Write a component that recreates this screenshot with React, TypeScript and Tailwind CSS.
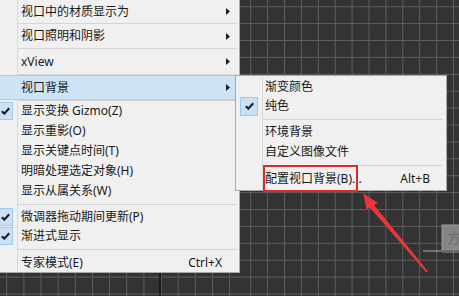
import React from "react";

const FONT = "[font-family:'Noto_Sans','Noto_Sans_CJK_SC',sans-serif]";

function Check() {
  return (
    <svg width="9" height="8" viewBox="0 0 9 8">
      <path d="M0.8 4.2 L3.3 6.6 L8.2 1.2" fill="none" stroke="#1c1c1c" strokeWidth="2.1" />
    </svg>
  );
}

function Tri() {
  return (
    <svg width="4" height="7" viewBox="0 0 4 7">
      <path d="M0 0 L4 3.5 L0 7 Z" fill="#1e1e1e" />
    </svg>
  );
}

type ItemProps = {
  label: string;
  h: string;
  checked?: boolean;
  sub?: boolean;
  shortcut?: string;
  highlight?: boolean;
};

function MainItem({ label, h, checked, sub, shortcut, highlight }: ItemProps) {
  return (
    <div
      className={`flex items-center shrink-0 ${h} ${
        highlight ? "bg-[#cde4f7] border-y border-[#a6cdef]" : ""
      }`}
    >
      <div
        className={`w-[18px] h-full shrink-0 flex items-center ${
          highlight ? "" : "border-r border-[#d9d9d9]"
        }`}
      >
        {checked && (
          <div className="w-[13px] h-[18px] bg-[#c9e0f5] border-y border-r border-[#9cc9ee] flex items-center pl-[1px]">
            <Check />
          </div>
        )}
      </div>
      <div className="pl-[3px] flex-1 text-[12px] leading-none text-[#181818] whitespace-nowrap">{label}</div>
      {shortcut && <div className="text-[12px] leading-none text-[#181818] mr-[17px]">{shortcut}</div>}
      {sub && (
        <div className="mr-[9px] flex items-center">
          <Tri />
        </div>
      )}
    </div>
  );
}

function MainSep({ h }: { h: string }) {
  return (
    <div className={`flex shrink-0 ${h}`}>
      <div className="w-[18px] h-full shrink-0 border-r border-[#d9d9d9]" />
      <div className="flex-1 flex items-center mr-[2px]">
        <div className="w-full h-px bg-[#d3d3d3]" />
      </div>
    </div>
  );
}

function TopSep() {
  return (
    <div className="flex shrink-0 h-px">
      <div className="w-[18px] h-full shrink-0 border-r border-[#d9d9d9]" />
      <div className="flex-1 h-px bg-[#d6d6d6] mr-[2px]" />
    </div>
  );
}

function SubItem({ label, h, checked, shortcut }: ItemProps) {
  return (
    <div className={`flex items-center shrink-0 ${h}`}>
      <div className="w-[27px] h-full shrink-0 border-r border-[#d9d9d9] flex items-center">
        {checked && (
          <div className="ml-[4px] w-[18px] h-[19px] bg-[#c9e0f5] border border-[#9cc9ee] flex items-center justify-center">
            <Check />
          </div>
        )}
      </div>
      <div className="pl-[2px] flex-1 text-[12px] leading-none text-[#181818] whitespace-nowrap">{label}</div>
      {shortcut && <div className="text-[12px] leading-none text-[#181818] mr-[16px]">{shortcut}</div>}
    </div>
  );
}

function SubSep() {
  return (
    <div className="flex shrink-0 h-[6px]">
      <div className="w-[27px] h-full shrink-0 border-r border-[#d9d9d9]" />
      <div className="flex-1 flex items-center mr-[4px]">
        <div className="w-full h-px bg-[#d3d3d3]" />
      </div>
    </div>
  );
}

function Viewport() {
  const vx: number[] = [];
  for (let x = 250.7 - 16.9 * 15; x < 460; x += 16.9) if (x >= 235) vx.push(x);
  const vxBottom: number[] = [];
  for (let x = 6.7; x < 240; x += 17.15) vxBottom.push(x);
  const hy: number[] = [];
  for (let y = 6.7; y < 297; y += 16.9) hy.push(y);
  return (
    <svg className="absolute inset-0" width="459" height="296" viewBox="0 0 459 296">
      <rect width="459" height="296" fill="#333333" />
      {vx.map((x, i) => (
        <line key={"v" + i} x1={x} y1={0} x2={x} y2={296} stroke="#5f5f5f" strokeWidth="1" />
      ))}
      {vxBottom.map((x, i) => (
        <line key={"vb" + i} x1={x} y1={260} x2={x} y2={296} stroke="#5f5f5f" strokeWidth="1" />
      ))}
      {hy.map((y, i) => (
        <line key={"h" + i} x1={0} y1={y} x2={459} y2={y} stroke="#5f5f5f" strokeWidth="1" />
      ))}
      <line x1="160" y1="260" x2="160" y2="296" stroke="#141414" strokeWidth="1.6" />
      <rect x="442" y="225" width="20" height="25" fill="#858585" stroke="#9d9d9d" strokeWidth="1" />
      <text x="447" y="243" fontSize="14" fill="#6c6c6c" fontFamily="Noto Sans CJK SC, sans-serif">方</text>
      <line x1="423" y1="251" x2="442" y2="251" stroke="#b0b0b0" strokeWidth="1" />
      <line x1="442" y1="252" x2="459" y2="252" stroke="#9a9a9a" strokeWidth="1" />
    </svg>
  );
}

function RedArrow() {
  return (
    <svg className="absolute inset-0 pointer-events-none" width="459" height="296" viewBox="0 0 459 296">
      <polygon points="363.2,193.2 378,203 366.5,209.5" fill="#e8363a" />
      <polygon points="373.6,204.4 427.9,271.3 426.3,272.6 369.8,207.6" fill="#e8363a" />
    </svg>
  );
}

export default function App() {
  return (
    <div className={`relative w-[459px] h-[296px] overflow-hidden ${FONT}`}>
      <Viewport />

      {/* main menu */}
      <div className="absolute left-0 top-0 w-[240px] h-[273px] bg-[#f0f0f0] border-r border-b border-[#a9a9a9] flex flex-col">
        <MainItem label="视口中的材质显示为" h="h-[23px]" sub />
        <TopSep />
        <MainItem label="视口照明和阴影" h="h-[24px]" sub />
        <TopSep />
        <MainItem label="xView" h="h-[25px]" sub />
        <TopSep />
        <MainItem label="视口背景" h="h-[25px]" sub highlight />
        <MainSep h="h-[1px]" />
        <MainItem label="显示变换 Gizmo(Z)" h="h-[20px]" checked />
        <MainItem label="显示重影(O)" h="h-[20px]" />
        <MainItem label="显示关键点时间(T)" h="h-[20px]" />
        <MainItem label="明暗处理选定对象(H)" h="h-[20px]" />
        <MainItem label="显示从属关系(W)" h="h-[20px]" />
        <MainSep h="h-[6px]" />
        <MainItem label="微调器拖动期间更新(P)" h="h-[19px]" checked />
        <MainItem label="渐进式显示" h="h-[19px]" checked />
        <MainSep h="h-[8px]" />
        <MainItem label="专家模式(E)" h="h-[19px]" shortcut="Ctrl+X" />
      </div>

      {/* submenu */}
      <div className="absolute left-[235px] top-[75px] w-[212px] h-[116px] bg-[#f0f0f0] border border-[#a9a9a9] flex flex-col pt-[1px]">
        <SubItem label="渐变颜色" h="h-[19px]" />
        <SubItem label="纯色" h="h-[20px]" checked />
        <SubSep />
        <SubItem label="环境背景" h="h-[20px]" />
        <SubItem label="自定义图像文件" h="h-[20px]" />
        <SubSep />
        <SubItem label="配置视口背景(B)..." h="h-[22px]" shortcut="Alt+B" />
      </div>

      {/* red highlight box */}
      <div className="absolute left-[263px] top-[165px] w-[95px] h-[27px] border-2 border-[#e3262c]" />

      <RedArrow />
    </div>
  );
}
